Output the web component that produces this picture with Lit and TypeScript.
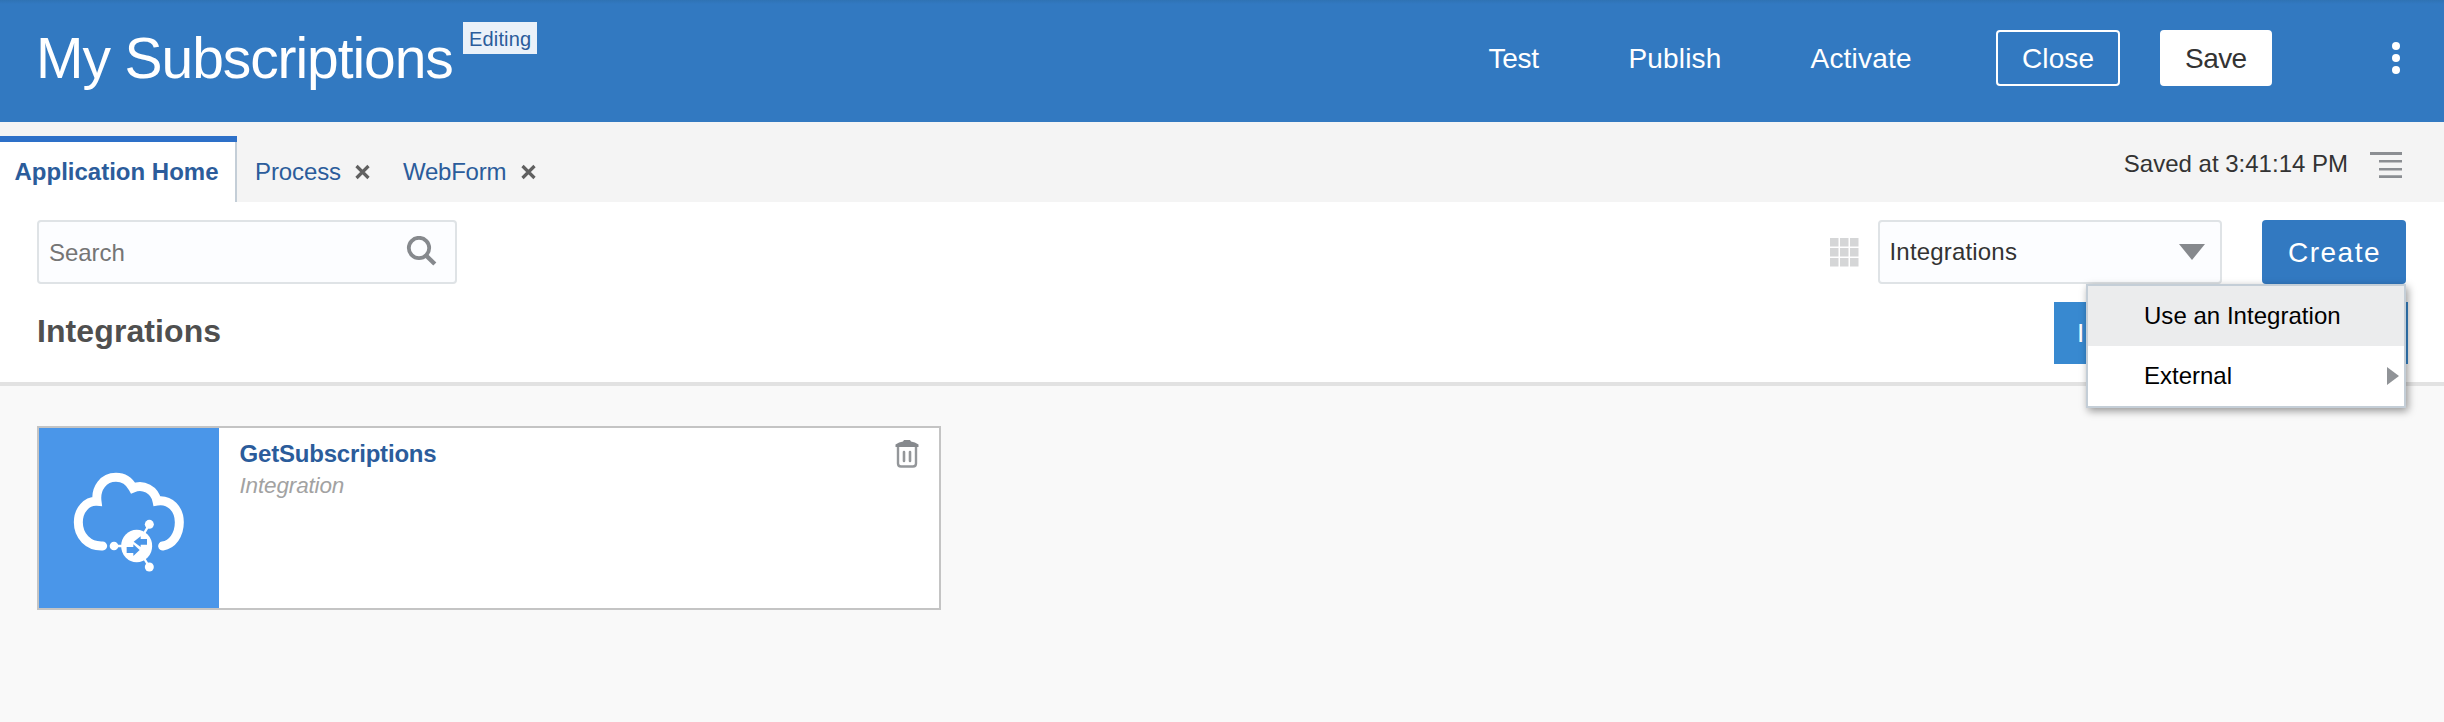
import { LitElement, html, css, svg } from "lit";
import { customElement } from "lit/decorators.js";

const closeIcon = html`<svg class="x" width="18" height="18" viewBox="0 0 18 18">
  <path d="M2.5 3L14.5 15M14.5 3L2.5 15" stroke="#606060" stroke-width="3.2" fill="none" />
</svg>`;

const gridCells = [0, 10, 20].flatMap((y) => [0, 10, 20].map((x) => svg`<rect x=${x} y=${y} width="8.5" height="8.5" />`));

@customElement("app-root")
export class AppRoot extends LitElement {
  static styles = css`
    :host {
      display: block;
      height: 722px;
      overflow: hidden;
      background: #f9f9f9;
      color: #333;
      font: 24px/30px "Liberation Sans", Arial, Helvetica, sans-serif;
      white-space: nowrap;
    }
    * { box-sizing: border-box; }
    svg { display: block; flex: none; }
    header {
      display: flex;
      align-items: center;
      height: 122px;
      padding: 0 44px 6px 36px;
      background: linear-gradient(#2f73b4, #3279c1 4px);
      color: #fff;
      font-size: 28px;
      line-height: 57px;
    }
    .title {
      width: 416px;
      margin: 0;
      font-weight: 400;
      font-size: 57px;
      line-height: 116px;
      letter-spacing: -1.08px;
    }
    .badge {
      align-self: flex-start;
      width: 74px;
      height: 32px;
      margin: 22px 0 0 11px;
      padding-left: 6px;
      background: #eaf1f9;
      color: #2b5c9b;
      font-size: 20px;
      line-height: 34px;
      letter-spacing: 0.16px;
    }
    .actions { display: flex; align-items: center; margin-left: auto; }
    .test { width: 140px; letter-spacing: -0.3px; }
    .publish { width: 182px; letter-spacing: 0.17px; }
    .activate { width: 185.5px; letter-spacing: 0.2px; }
    .btn { height: 56px; border: 2px solid #fff; border-radius: 4px; }
    .btn span { display: block; margin-top: -2px; }
    .close { width: 124px; padding-left: 24px; letter-spacing: 0.12px; }
    .save { width: 112px; margin: 0 120px 0 40px; padding-left: 23px; background: #fff; color: #333; letter-spacing: -0.55px; }
    .tabs { display: flex; align-items: flex-end; height: 80px; background: #f4f4f4; color: #2b5c9b; line-height: 60px; }
    .tab { display: flex; align-items: center; height: 60px; }
    .home {
      width: 237px;
      height: 66px;
      padding-left: 14.5px;
      border-top: 6px solid #2d70c8;
      background: linear-gradient(#c4ced7, #c4ced7) right / 2px 100% no-repeat #fff;
      font-weight: 700;
    }
    .process { margin-left: 18px; letter-spacing: -0.11px; }
    .form { margin-left: 31px; letter-spacing: -0.23px; }
    .process .x { margin-left: 13px; }
    .form .x { margin-left: 14px; }
    .saved { margin: 0 22px 0 auto; align-self: flex-start; color: #333; line-height: 83px; }
    .outline { align-self: flex-start; margin: 30px 42px 0 0; }
    .top { height: 184px; padding: 18px 36px 0 37px; background: #fff; border-bottom: 4px solid #e2e2e2; }
    .row { display: flex; align-items: center; }
    .field {
      display: flex;
      align-items: center;
      justify-content: space-between;
      height: 64px;
      border: 2px solid #dfe3e6;
      border-radius: 4px;
      background: #fcfdff;
    }
    .search { width: 420px; padding: 0 18px 0 10px; color: #757575; letter-spacing: -0.04px; }
    .search span { padding-top: 2px; }
    .grid { margin: 0 19px 0 auto; }
    .select { width: 344px; padding: 0 15px 0 9.5px; letter-spacing: 0.18px; }
    .anchor { position: relative; margin: 0 2px 0 40px; }
    .create {
      width: 144px;
      height: 64px;
      padding-left: 26px;
      border-radius: 4px;
      background: #3279c1;
      color: #fff;
      font-size: 28px;
      line-height: 65px;
      letter-spacing: 1.5px;
    }
    .menu {
      position: absolute;
      top: 64px;
      right: 0;
      width: 320px;
      height: 124px;
      border: 2px solid #c4ced7;
      background: #fff;
      color: #000;
      box-shadow: 2px 3px 8px rgba(0, 0, 0, 0.4);
    }
    .item { display: flex; align-items: center; justify-content: space-between; height: 60px; padding: 0 5px 0 56px; }
    .item.active { background: #ebeced; letter-spacing: 0.03px; }
    .heading-row { margin-top: 18px; justify-content: space-between; align-items: flex-start; }
    h2 { margin: 0; color: #4f4f4f; font-size: 32px; line-height: 58px; letter-spacing: 0.09px; }
    .banner { width: 354px; height: 62px; padding-left: 23px; background: #3889d0; color: #fff; font-size: 26px; line-height: 62px; }
    .card { display: flex; width: 904px; height: 184px; margin: 40px 0 0 37px; border: 2px solid #c4c4c4; background: #fff; }
    .tile { width: 180px; height: 180px; background: #4a96e9; }
    .info { flex: 1; padding: 9px 0 0 20.5px; }
    .name { color: #2b5c9b; font-weight: 700; line-height: 33px; letter-spacing: -0.19px; }
    .kind { color: #a2a2a2; font-style: italic; font-size: 22.5px; line-height: 32px; letter-spacing: -0.15px; }
    .trash { margin: 11px 20px 0 0; }
  `;

  render() {
    return html`
      <header>
        <h1 class="title">My Subscriptions</h1>
        <div class="badge">Editing</div>
        <div class="actions">
          <div class="test">Test</div>
          <div class="publish">Publish</div>
          <div class="activate">Activate</div>
          <div class="btn close"><span>Close</span></div>
          <div class="btn save"><span>Save</span></div>
          <svg width="8" height="32" viewBox="0 0 8 32" fill="#fff">
            <circle cx="4" cy="4" r="4" /><circle cx="4" cy="16" r="4" /><circle cx="4" cy="28" r="4" />
          </svg>
        </div>
      </header>
      <nav class="tabs">
        <div class="tab home">Application Home</div>
        <div class="tab process">Process${closeIcon}</div>
        <div class="tab form">WebForm${closeIcon}</div>
        <div class="saved">Saved at 3:41:14 PM</div>
        <svg class="outline" width="32" height="26" viewBox="0 0 32 26" fill="#8b8e92">
          <path d="M0 0h32v3H0zM9 8h23v2.5H9zM9 16h23v2.5H9zM9 23.2h23v2.8H9z" />
        </svg>
      </nav>
      <section class="top">
        <div class="row">
          <div class="field search">
            <span>Search</span>
            <svg width="31" height="32" viewBox="0 0 31 32" fill="none" stroke="#86898d">
              <circle cx="13" cy="12" r="10.2" stroke-width="3.8" />
              <path d="M20 19.5L28.8 28" stroke-width="4.4" />
            </svg>
          </div>
          <svg class="grid" width="29" height="29" viewBox="0 0 29 29" fill="#d5d6d7">${gridCells}</svg>
          <div class="field select">
            Integrations
            <svg width="26" height="16" viewBox="0 0 26 16" fill="#86898d"><path d="M0 0H26L13 16Z" /></svg>
          </div>
          <div class="anchor">
            <div class="create">Create</div>
            <div class="menu">
              <div class="item active">Use an Integration</div>
              <div class="item">
                External
                <svg width="12" height="18" viewBox="0 0 12 18" fill="#909397"><path d="M0 0L12 9L0 18Z" /></svg>
              </div>
            </div>
          </div>
        </div>
        <div class="row heading-row">
          <h2>Integrations</h2>
          <div class="banner">I</div>
        </div>
      </section>
      <article class="card">
        <svg class="tile" viewBox="-63 -66 540 540" fill="none" stroke="#fff">
          <path
            d="M128 288C85 290 55 258 55 217C55 180 80 152 111 154C106 115 130 82 168 82C190 82 208 94 219 114C250 101 284 119 291 153C330 146 358 178 358 217C358 255 337 283 308 288"
            stroke-width="27"
            stroke-linecap="round"
          />
          <path d="M230 288H162M230 288L268 223M230 288L268 351" stroke-width="7" />
          <g fill="#fff" stroke="none">
            <ellipse cx="230" cy="288" rx="46.5" ry="49" />
            <circle cx="162" cy="288" r="13" /><circle cx="268" cy="223" r="13.5" /><circle cx="268" cy="351" r="13.5" />
          </g>
          <path
            d="M221 275L242 259V267H261V284H242V291ZM239 300L220 318V309H200V291H220V283Z"
            fill="#4a96e9"
            stroke="none"
          />
        </svg>
        <div class="info">
          <div class="name">GetSubscriptions</div>
          <div class="kind">Integration</div>
        </div>
        <svg class="trash" width="24" height="30" viewBox="0 0 24 30">
          <path d="M0.5 5.5Q4 3 8 2.5L9 1H15L16 2.5Q20 3 23.5 5.5V8H0.5Z" fill="#86898d" />
          <path d="M3 8V24.5Q3 27.5 6 27.5H18Q21 27.5 21 24.5V8" fill="none" stroke="#94979a" stroke-width="2.4" />
          <path d="M9 13V22M15 13V22" stroke="#94979a" stroke-width="2.6" stroke-linecap="round" />
        </svg>
      </article>
    `;
  }
}
